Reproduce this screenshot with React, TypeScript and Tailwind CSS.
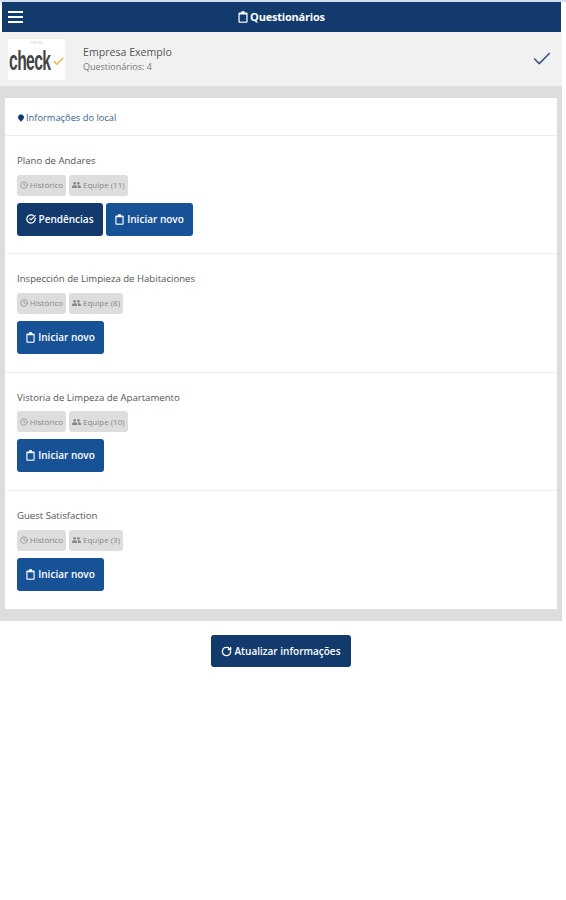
import { Check, CircleCheckBig, Clock, MapPin, RotateCw } from "lucide-react";

const Clipboard = ({ className }: { className: string }) => (
  <svg viewBox="0 0 12 14" className={className} fill="currentColor">
    <path d="M4 0h4v1.500h2.200A1.300 1.300 0 0 1 11.500 2.800v9.900A1.300 1.300 0 0 1 10.200 14H1.800A1.300 1.300 0 0 1 .5 12.700V2.800A1.300 1.300 0 0 1 1.800 1.500H4Z" />
    <path d="M2 4h8v8.500H2Z" fill="var(--hole)" />
  </svg>
);

const People = () => (
  <svg viewBox="0 0 12 8" className="h-[6px] w-[9px]" fill="currentColor">
    <circle cx="3.500" cy="1.800" r="1.800" />
    <circle cx="8.500" cy="1.800" r="1.800" />
    <path d="M0 8V6.200C0 5 1.500 4.200 3.500 4.200S7 5 7 6.200V8Z" />
    <path d="M8 8V5.800C8 5.200 7.700 4.700 7.300 4.300 9.800 4 12 4.900 12 6.200V8Z" />
  </svg>
);

const rows = [
  { title: "Plano de Andares", team: "Equipe (11)", pending: true },
  { title: "Inspección de Limpieza de Habitaciones", team: "Equipe (8)", pending: false },
  { title: "Vistoria de Limpeza de Apartamento", team: "Equipe (10)", pending: false },
  { title: "Guest Satisfaction", team: "Equipe (3)", pending: false },
];

const Row = ({ title, team, pending, last }: { title: string; team: string; pending: boolean; last: boolean }) => (
  <div className={`h-[118.300px] px-3 pt-[18px] ${last ? "" : "border-b border-[#eeeeee]"}`}>
    <div className="h-[14px] text-[9.600px] leading-[14px] text-[#555555]">{title}</div>
    <div className="mt-[6.700px] flex gap-[3px]">
      <div className="flex h-[21px] w-[49px] items-center justify-center gap-[2px] rounded-[3px] bg-[#dddddd] text-[8px] text-[#888888]">
        <Clock size={8} />
        Histórico
      </div>
      <div className="flex h-[21px] items-center gap-[2px] rounded-[3px] bg-[#dddddd] px-[3px] text-[8px] text-[#888888]">
        <People />
        {team}
      </div>
    </div>
    <div className="mt-[7px] flex gap-[3px]">
      {pending && (
        <div className="flex h-[33px] w-[86px] items-center justify-center gap-[2px] rounded-[3px] bg-[#123a6c] text-[10px] font-semibold text-white">
          <CircleCheckBig size={10} strokeWidth={3} />
          Pendências
        </div>
      )}
      <div className="flex h-[33px] w-[87px] items-center justify-center gap-[3px] rounded-[3px] bg-[#175296] text-[10px] font-semibold text-white [--hole:#175296]">
        <Clipboard className="h-[11px] w-[9px]" />
        Iniciar novo
      </div>
    </div>
  </div>
);

export default function App() {
  return (
    <div className="h-[900px] w-[566px] overflow-hidden bg-white font-['Open_Sans',sans-serif]">
      <div className="bg-[#d3dfef] pt-[2px]">
        <div className="bg-white pr-[5px] pl-[2px]">
          <div className="relative flex h-[30px] items-center justify-center bg-[#123a6c] text-[11px] font-bold tracking-[-0.2px] text-white [--hole:#123a6c]">
            <div className="absolute top-[9px] left-[6px] flex w-[15px] flex-col gap-[3px]">
              <span className="h-[2px] bg-white" />
              <span className="h-[2px] bg-white" />
              <span className="h-[2px] bg-white" />
            </div>
            <Clipboard className="mr-[2px] h-[12px] w-[10px]" />
            Questionários
          </div>
        </div>
      </div>
      <div className="w-[562px]">
        <div className="flex h-[54px] items-center bg-[#f1f1f1] pr-[10px] pl-[8px]">
          <div className="flex h-[41px] w-[57px] flex-col items-center overflow-hidden bg-white pt-[2px]">
            <span className="h-[5px] text-[3px] leading-[5px] text-[#cccccc]">PLAY ME</span>
            <span className="flex h-[31px] items-center font-['Liberation_Sans',sans-serif] text-[27px] leading-[31px] font-bold text-[#444444]">
              <span className="w-[43px] origin-left scale-x-[0.58] tracking-[-1px]">check</span>
              <Check size={13} strokeWidth={3} className="text-[#e8b84a]" />
            </span>
          </div>
          <div className="ml-[18px] flex-1">
            <div className="text-[10.600px] leading-[15px] text-[#555555]">Empresa Exemplo</div>
            <div className="text-[9px] leading-[14px] text-[#777777]">Questionários: 4</div>
          </div>
          <Check size={22} strokeWidth={1.800} className="-mr-[1px] text-[#3c5a82]" />
        </div>
        <div className="bg-[#dddddd] pt-[12px] pr-[5px] pb-[12px] pl-[5px]">
          <div className="bg-white">
            <div className="flex h-[38px] items-center gap-[1px] border-b border-[#eeeeee] px-3 pt-[2px] text-[9.300px] text-[#3c5f8c]">
              <MapPin size={8} fill="#123a6c" className="text-[#123a6c]" />
              Informações do local
            </div>
            {rows.map((r, i) => (
              <Row key={r.title} {...r} last={i === rows.length - 1} />
            ))}
          </div>
        </div>
      </div>
      <div className="mt-[14px] flex justify-center pr-[4px]">
        <div className="flex h-[32px] w-[140px] items-center justify-center gap-[2px] rounded-[3px] bg-[#123a6c] text-[10px] font-semibold text-white">
          <RotateCw size={11} strokeWidth={3} />
          Atualizar informações
        </div>
      </div>
    </div>
  );
}
